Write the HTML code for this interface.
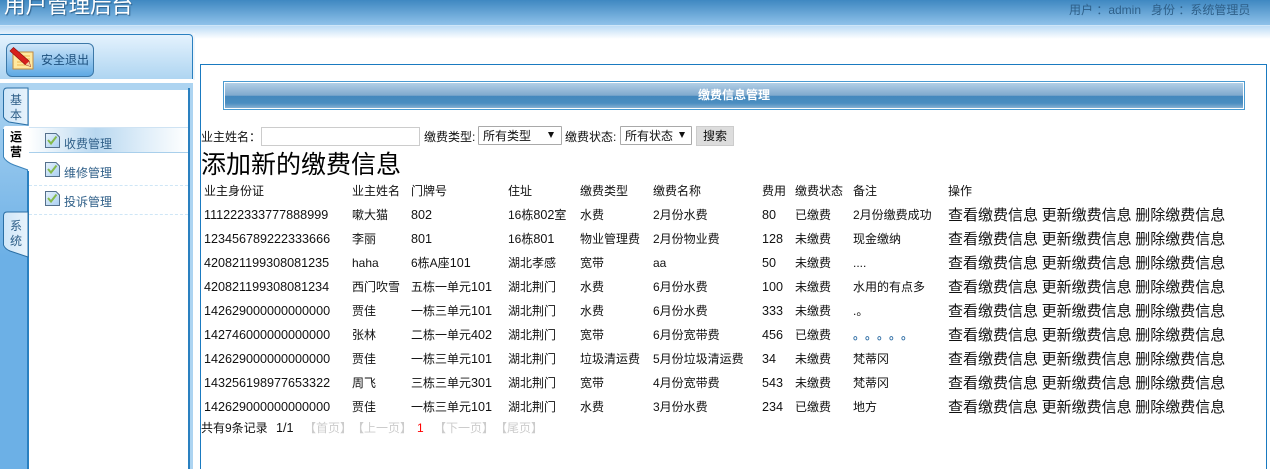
<!DOCTYPE html>
<html lang="zh-CN">
<head>
<meta charset="utf-8">
<title>用户管理后台</title>
<style>
html,body{margin:0;padding:0;background:#fff;width:1270px;height:469px;overflow:hidden}
body{font:12px "Liberation Sans","Noto Sans CJK SC",sans-serif;color:#111}
#wrap{position:relative;left:0;top:0;width:1270px;height:469px;overflow:hidden}
div,span{position:absolute;box-sizing:border-box;white-space:nowrap}
td span,td b{position:static}
.n{font-size:12.6px}
.d{font-size:12.6px;line-height:1}
#table{position:absolute;left:201px;top:179px;border-collapse:collapse;table-layout:fixed;width:1030px}
#table tr{height:24px}
#table td{padding:0 0 0 3px;height:24px;font-size:12px;line-height:24px;white-space:nowrap;overflow:visible;vertical-align:top}
#table td.n{font-size:12.6px}
#table td.a{font-size:15px;line-height:24px}
#table td.a span{margin-right:3.6px;position:relative;top:1px;line-height:1}
#table td.dots{text-spacing-trim:space-all;font-weight:bold;color:#2f6ea5}
.menu{font-size:12px;color:#2f5f88;left:64px}
.tab{left:3px;width:26px;font-size:12px;line-height:15px;text-align:center;color:#2f5f88}
.sel{top:126px;height:19px;border:1px solid #a9a9a9;background:#fff;font-size:12px;line-height:19px;padding-left:4px;border-radius:1px}
.arrow{top:5px;width:0;height:0;border-left:3.5px solid transparent;border-right:3.5px solid transparent;border-top:6px solid #111}
.lb{line-height:15px;top:130px}
.pg{top:421px;line-height:15px;color:#ccc}
</style>
</head>
<body>
<div id="wrap">
<!-- header -->
<div style="left:0;top:0;width:1270px;height:25px;background:linear-gradient(#3f88c1,#8fc2ea)"></div>
<div style="left:0;top:25px;width:1270px;height:1px;background:#cfe6f8"></div>
<div style="left:0;top:26px;width:1270px;height:13px;background:linear-gradient(#bcdcf6,#fff)"></div>
<div style="left:4px;top:-7px;font-size:21.5px;line-height:26px;color:#fff;text-shadow:1px 1px 1px #2c5f8a">用户管理后台</div>
<div style="left:1069px;top:3px;font-size:12px;line-height:14px;color:#2e5f88">用户 ：admin&nbsp;&nbsp; 身份 ：系统管理员</div>

<!-- left top panel -->
<div style="left:-3px;top:34px;width:196px;height:46px;border:1px solid #2a80c0;border-bottom:0;border-radius:4px 4px 0 0;background:linear-gradient(#e4f2fd,#add4f1)"></div>
<div style="left:193px;top:33px;width:2px;height:47px;background:#eef5fb"></div>
<div style="left:0;top:79px;width:193px;height:4px;background:#fff"></div>
<div style="left:6px;top:43px;width:88px;height:34px;border:1px solid #3c78a8;border-radius:6px;background:linear-gradient(#cfe6f9,#5ea9e4)"></div>
<svg style="position:absolute;left:9px;top:46px" width="27" height="26" viewBox="0 0 27 26">
<rect x="4" y="6" width="20" height="17" fill="#ffe9a0" stroke="#c08a40"/>
<path d="M14 10H21M14 13H21M8 16H21M8 19H21" stroke="#f0b850" stroke-width="1"/>
<path d="M1 5L4.500 1.500L20 15L21.500 20.500L16 18.500Z" fill="#d8201c" stroke="#901010" stroke-width=".7"/>
<path d="M16.500 18.500L21.500 20.500L20 15.500Z" fill="#f2d0a0"/>
</svg>
<div style="left:41px;top:52px;font-size:12px;line-height:16px;color:#1c4f7c">安全退出</div>

<!-- left lower panel -->
<div style="left:0;top:83px;width:193px;height:386px;background:linear-gradient(#add4f1,#6cb0e6 45%,#6cb0e6)"></div>
<div style="left:28px;top:83px;width:165px;height:7px;background:#add4f1"></div>
<div style="left:190px;top:83px;width:3px;height:386px;background:#add4f1"></div>
<div style="left:188px;top:88px;width:2px;height:381px;background:#2a80c0"></div>
<div style="left:29px;top:90px;width:159px;height:379px;background:#fff"></div>
<div style="left:27px;top:170px;width:2px;height:299px;background:#2a80c0"></div>

<!-- tabs -->
<svg style="position:absolute;left:0;top:85px" width="32" height="180" viewBox="0 0 32 180">
<defs><linearGradient id="t" x1="0" y1="0" x2="1" y2="0"><stop offset="0" stop-color="#cfe6f8"/><stop offset="1" stop-color="#e7f3fc"/></linearGradient></defs>
<path d="M28 3H7Q3.500 3 3.500 7V32Q5 35 9 37L28 40Z" fill="url(#t)" stroke="#2a6fa5"/>
<path d="M29 41H6Q3.500 41 3.500 44V72Q6 77 14 80L28 85V86H29Z" fill="#fff" stroke="none"/>
<path d="M3.500 44V72Q6 77 14 80L28 85" fill="none" stroke="#3c84bb"/>
<path d="M28 127H7Q3.500 127 3.500 131V160Q5 164 10 166L28 172Z" fill="url(#t)" stroke="#2a6fa5"/>
</svg>
<div class="tab" style="top:93px">基<br>本</div>
<div class="tab" style="top:130px;color:#000;font-weight:bold">运<br>营</div>
<div class="tab" style="top:219px">系<br>统</div>

<!-- menu -->
<div style="left:29px;top:127px;width:159px;height:26px;background:linear-gradient(90deg,#fff,#b9d8f0 42%,#dcecf8 70%,#fff);border-top:1px solid #cfe3f3;border-bottom:1px solid #a9cfeb"></div>
<div style="left:29px;top:185px;width:159px;height:0;border-top:1px dashed #cfe6f6"></div>
<div style="left:29px;top:214px;width:159px;height:0;border-top:1px dashed #cfe6f6"></div>
<svg style="position:absolute;left:45px;top:133px" width="15" height="15" viewBox="0 0 15 15"><defs><linearGradient id="c" x1="0" y1="0" x2="1" y2="1"><stop offset="0" stop-color="#e8f3fc"/><stop offset="1" stop-color="#a8cdf0"/></linearGradient></defs><path d="M.500.500H11L14.500 4V14.500H.500Z" fill="url(#c)" stroke="#55708c"/><path d="M3 7L6 10.500L11.500 3.500" fill="none" stroke="#84ba4c" stroke-width="2"/></svg>
<svg style="position:absolute;left:45px;top:162px" width="15" height="15" viewBox="0 0 15 15"><path d="M.500.500H11L14.500 4V14.500H.500Z" fill="url(#c)" stroke="#55708c"/><path d="M3 7L6 10.500L11.500 3.500" fill="none" stroke="#84ba4c" stroke-width="2"/></svg>
<svg style="position:absolute;left:45px;top:191px" width="15" height="15" viewBox="0 0 15 15"><path d="M.500.500H11L14.500 4V14.500H.500Z" fill="url(#c)" stroke="#55708c"/><path d="M3 7L6 10.500L11.500 3.500" fill="none" stroke="#84ba4c" stroke-width="2"/></svg>
<div class="menu" style="top:135px">收费管理</div>
<div class="menu" style="top:164px">维修管理</div>
<div class="menu" style="top:193px">投诉管理</div>

<!-- main -->
<div style="left:200px;top:64px;width:1067px;height:405px;border:1px solid #1a7ac0;border-bottom:0"></div>
<div style="left:223px;top:81px;width:1022px;height:29px;border:1px solid #4a9ad0;padding:1px;background:#fff">
  <div style="position:static;height:25px;background:linear-gradient(#b3cfe6,#7fa9cd 50%,#4488bd 52%,#4a8dc0 80%,#86b0d2);color:#fff;font-weight:bold;text-align:center;line-height:25px;font-size:12px">缴费信息管理</div>
</div>

<!-- search -->
<div class="lb" style="left:201px">业主姓名：</div>
<div style="left:261px;top:127px;width:159px;height:19px;border:1px solid #ccc;background:#fff"></div>
<div class="lb" style="left:424px">缴费类型:</div>
<div class="sel" style="left:478px;width:84px">所有类型<span class="arrow" style="position:absolute;left:69px"></span></div>
<div class="lb" style="left:565px">缴费状态:</div>
<div class="sel" style="left:620px;width:72px">所有状态<span class="arrow" style="position:absolute;left:58px"></span></div>
<div style="left:696px;top:126px;width:38px;height:20px;background:#ddd;border:1px solid #ccc;text-align:center;line-height:19px">搜索</div>

<div style="left:201px;top:150px;font-size:25px;line-height:31px;color:#000">添加新的缴费信息</div>

<table id="table">
<colgroup><col style="width:148px"><col style="width:59px"><col style="width:97px"><col style="width:72px"><col style="width:73px"><col style="width:109px"><col style="width:33px"><col style="width:58px"><col style="width:95px"><col style="width:286px"></colgroup>
<tr><td>业主身份证</td><td>业主姓名</td><td>门牌号</td><td>住址</td><td>缴费类型</td><td>缴费名称</td><td>费用</td><td>缴费状态</td><td>备注</td><td>操作</td></tr>
<tr><td class="n">111222333777888999</td><td>嗽大猫</td><td class="n">802</td><td>16栋<span class="d">802</span>室</td><td>水费</td><td>2月份水费</td><td class="n">80</td><td>已缴费</td><td>2月份缴费成功</td><td class="a"><span>查看缴费信息</span><span>更新缴费信息</span><span>删除缴费信息</span></td></tr>
<tr><td class="n">123456789222333666</td><td>李丽</td><td class="n">801</td><td>16栋<span class="d">801</span></td><td>物业管理费</td><td>2月份物业费</td><td class="n">128</td><td>未缴费</td><td>现金缴纳</td><td class="a"><span>查看缴费信息</span><span>更新缴费信息</span><span>删除缴费信息</span></td></tr>
<tr><td class="n">420821199308081235</td><td>haha</td><td>6栋A座<span class="d">101</span></td><td>湖北孝感</td><td>宽带</td><td>aa</td><td class="n">50</td><td>未缴费</td><td>....</td><td class="a"><span>查看缴费信息</span><span>更新缴费信息</span><span>删除缴费信息</span></td></tr>
<tr><td class="n">420821199308081234</td><td>西门吹雪</td><td>五栋一单元<span class="d">101</span></td><td>湖北荆门</td><td>水费</td><td>6月份水费</td><td class="n">100</td><td>未缴费</td><td>水用的有点多</td><td class="a"><span>查看缴费信息</span><span>更新缴费信息</span><span>删除缴费信息</span></td></tr>
<tr><td class="n">142629000000000000</td><td>贾佳</td><td>一栋三单元<span class="d">101</span></td><td>湖北荆门</td><td>水费</td><td>6月份水费</td><td class="n">333</td><td>未缴费</td><td>.。</td><td class="a"><span>查看缴费信息</span><span>更新缴费信息</span><span>删除缴费信息</span></td></tr>
<tr><td class="n">142746000000000000</td><td>张林</td><td>二栋一单元<span class="d">402</span></td><td>湖北荆门</td><td>宽带</td><td>6月份宽带费</td><td class="n">456</td><td>已缴费</td><td class="dots">。。。。。</td><td class="a"><span>查看缴费信息</span><span>更新缴费信息</span><span>删除缴费信息</span></td></tr>
<tr><td class="n">142629000000000000</td><td>贾佳</td><td>一栋三单元<span class="d">101</span></td><td>湖北荆门</td><td>垃圾清运费</td><td>5月份垃圾清运费</td><td class="n">34</td><td>未缴费</td><td>梵蒂冈</td><td class="a"><span>查看缴费信息</span><span>更新缴费信息</span><span>删除缴费信息</span></td></tr>
<tr><td class="n">143256198977653322</td><td>周飞</td><td>三栋三单元<span class="d">301</span></td><td>湖北荆门</td><td>宽带</td><td>4月份宽带费</td><td class="n">543</td><td>未缴费</td><td>梵蒂冈</td><td class="a"><span>查看缴费信息</span><span>更新缴费信息</span><span>删除缴费信息</span></td></tr>
<tr><td class="n">142629000000000000</td><td>贾佳</td><td>一栋三单元<span class="d">101</span></td><td>湖北荆门</td><td>水费</td><td>3月份水费</td><td class="n">234</td><td>已缴费</td><td>地方</td><td class="a"><span>查看缴费信息</span><span>更新缴费信息</span><span>删除缴费信息</span></td></tr>
</table>

<!-- pager -->
<div style="left:201px;top:421px;line-height:15px">共有9条记录</div>
<div style="left:276px;top:421px;line-height:15px" class="n">1/1</div>
<div class="pg" style="left:304px">【首页】</div>
<div class="pg" style="left:352px">【上一页】</div>
<div class="pg" style="left:417px;color:#f00">1</div>
<div class="pg" style="left:434px">【下一页】</div>
<div class="pg" style="left:495px">【尾页】</div>
</div>
</body>
</html>
